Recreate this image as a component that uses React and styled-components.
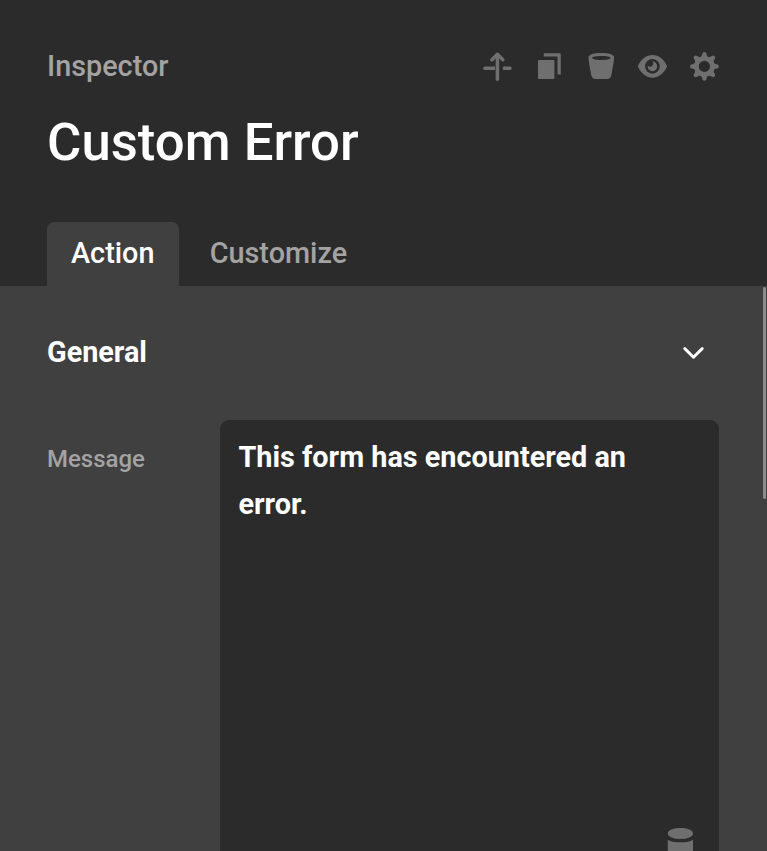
import { useState } from "react";
import styled, { createGlobalStyle } from "styled-components";

const COLORS = {
  header: "#2b2b2b",
  panel: "#404040",
  icon: "#6f6f6f",
  muted: "#a3a3a3",
  scroll: "#8c8c8c",
};

const DEFAULT_MESSAGE = "This form has encountered an error.";

const MoveIcon = () => (
  <Icon viewBox="0 0 30 30">
    <g fill="none" stroke={COLORS.icon} strokeWidth="3.5" strokeLinecap="round">
      <path d="M15.4 2.5V27.2" />
      <path d="M10 7.7L15.4 2.3L20.8 7.7" strokeLinejoin="round" />
      <path d="M2.9 16.3H11.5M22.4 16.3H28" />
      <path d="M11 16.3H13M21.4 16.3H23" strokeLinecap="butt" />
    </g>
  </Icon>
);

const DuplicateIcon = () => (
  <Icon viewBox="0 0 30 30">
    <rect x="4" y="8" width="16.4" height="19" rx="1" />
    <path d="M9.8 1.3H25.7Q26.8 1.3 26.8 2.4V22.5H23.5V4.5H9.8Z" />
  </Icon>
);

const TrashIcon = () => (
  <Icon viewBox="0 0 30 30">
    <path
      fillRule="evenodd"
      d="M15.3 1C22.5 1 28.1 2.4 28.1 5.3C28 9 26.5 17 25.4 23Q24.7 27 20.8 27H9.8Q5.9 27 5.2 23C4.1 17 2.6 9 2.5 5.3C2.5 2.4 8.1 1 15.3 1ZM15.3 4.1C10.4 4.1 6.2 4.8 6.2 5.9C6.2 7 10.4 7.9 15.3 7.9C20.2 7.9 24.4 7 24.4 5.9C24.4 4.8 20.2 4.1 15.3 4.1Z"
    />
  </Icon>
);

const EyeIcon = () => (
  <Icon viewBox="0 0 30 30">
    <path d="M0.2 15.1C-0.2 14.6 -0.2 14 0.2 13.4C3.4 7 8.4 3 14.5 3C20.6 3 25.6 7 28.8 13.4C29.2 14 29.2 14.6 28.8 15.1C25.6 21.8 20.6 25.8 14.5 25.8C8.4 25.8 3.4 21.8 0.2 15.1Z" />
    <circle cx="14.4" cy="14.4" r="7.3" fill={COLORS.header} />
    <path d="M14.3 9.6A4.8 4.8 0 1 1 9.7 13.6A2.9 2.9 0 0 0 14.3 9.6Z" />
  </Icon>
);

const GearIcon = () => (
  <Icon viewBox="0 0 30 30">
    {[0, 45, 90, 135, 180, 225, 270, 315].map((angle) => (
      <path
        key={angle}
        d="M10.4 5.2C11.6 4.5 12.1 3.2 12.3 1.8Q12.6 0 14.4 0Q16.2 0 16.5 1.8C16.7 3.2 17.2 4.5 18.4 5.2L18 10H10.8Z"
        transform={`rotate(${angle} 14.4 14.4)`}
      />
    ))}
    <circle cx="14.4" cy="14.4" r="10.1" />
    <circle cx="14.4" cy="14.4" r="5.6" fill={COLORS.header} />
  </Icon>
);

const App = () => {
  const [tab, setTab] = useState("Action");
  const [message, setMessage] = useState(DEFAULT_MESSAGE);

  return (
    <Inspector>
      <GlobalStyle />
      <Header>
        <TopRow>
          <PanelName>Inspector</PanelName>
          <Toolbar>
            <IconButton aria-label="Move">
              <MoveIcon />
            </IconButton>
            <IconButton aria-label="Duplicate">
              <DuplicateIcon />
            </IconButton>
            <IconButton aria-label="Delete">
              <TrashIcon />
            </IconButton>
            <IconButton aria-label="Preview">
              <EyeIcon />
            </IconButton>
            <IconButton aria-label="Settings">
              <GearIcon />
            </IconButton>
          </Toolbar>
        </TopRow>
        <Title>Custom Error</Title>
        <Tabs>
          {["Action", "Customize"].map((name) => (
            <Tab key={name} $active={tab === name} onClick={() => setTab(name)}>
              {name}
            </Tab>
          ))}
        </Tabs>
      </Header>

      <Body>
        <Content>
          <SectionHeader>
            <SectionTitle>General</SectionTitle>
            <Chevron viewBox="0 0 24 16">
              <path d="M3.8 4.6L12.5 13.2L21.2 4.6" />
            </Chevron>
          </SectionHeader>
          <Field>
            <Label htmlFor="message">Message</Label>
            <InputBox>
              <MessageInput
                id="message"
                value={message}
                spellCheck={false}
                onChange={(e) => setMessage(e.target.value)}
              />
              <DataIcon viewBox="0 0 26 32">
                <ellipse cx="13.4" cy="5.5" rx="12.6" ry="5.6" />
                <path d="M0.8 11.8C4.4 15.2 22.4 15.2 26 11.8V32H0.8Z" />
              </DataIcon>
            </InputBox>
          </Field>
        </Content>
        <ScrollTrack>
          <ScrollThumb />
        </ScrollTrack>
      </Body>
    </Inspector>
  );
};

const GlobalStyle = createGlobalStyle`
  * {
    box-sizing: border-box;
  }

  body {
    margin: 0;
    overflow: hidden;
    font-family: Roboto, sans-serif;
    background-color: ${COLORS.panel};
  }
`;

const Inspector = styled.div`
  display: flex;
  flex-direction: column;
  height: 100vh;
  overflow: hidden;
`;

const Header = styled.header`
  flex: none;
  display: flex;
  flex-direction: column;
  height: 286px;
  padding: 46px 47px 0;
  background-color: ${COLORS.header};
`;

const TopRow = styled.div`
  display: flex;
  justify-content: space-between;
  height: 40px;
`;

const PanelName = styled.div`
  font-size: 28.8px;
  font-weight: 500;
  line-height: 40px;
  color: ${COLORS.muted};
`;

const Toolbar = styled.div`
  display: flex;
  gap: 22px;
  padding-top: 6px;
`;

const IconButton = styled.button`
  width: 30px;
  height: 30px;
  padding: 0;
  border: none;
  background: none;
  cursor: pointer;
`;

const Icon = styled.svg`
  display: block;
  width: 30px;
  height: 30px;
  fill: ${COLORS.icon};
`;

const Title = styled.h1`
  margin: 24px 0 0;
  font-size: 52.7px;
  font-weight: 500;
  line-height: 64px;
  color: white;
`;

const Tabs = styled.div`
  display: flex;
  gap: 7px;
  margin-top: auto;
`;

const Tab = styled.button`
  height: 64px;
  padding: 0 24.3px 2px 24px;
  border: none;
  border-radius: 7px 7px 0 0;
  background-color: ${({ $active }) => ($active ? COLORS.panel : "transparent")};
  color: ${({ $active }) => ($active ? "white" : COLORS.muted)};
  font-family: inherit;
  font-size: 28.8px;
  font-weight: 500;
  cursor: pointer;
`;

const Body = styled.div`
  flex: 1;
  display: flex;
  min-height: 0;
  background-color: ${COLORS.panel};
`;

const Content = styled.div`
  flex: 1;
  padding: 46px 44px 0 47px;
`;

const SectionHeader = styled.div`
  display: flex;
  align-items: center;
  justify-content: space-between;
  height: 40px;
  padding-right: 14px;
`;

const SectionTitle = styled.h2`
  margin: 0;
  font-size: 28.8px;
  font-weight: 700;
  color: white;
`;

const Chevron = styled.svg`
  width: 24px;
  height: 16px;
  fill: none;
  stroke: white;
  stroke-width: 2.9;
  stroke-linecap: round;
  stroke-linejoin: round;
`;

const Field = styled.div`
  display: grid;
  grid-template-columns: 173px 1fr;
  margin-top: 48px;
`;

const Label = styled.label`
  padding-top: 23px;
  font-size: 24px;
  font-weight: 500;
  line-height: 32px;
  color: ${COLORS.muted};
`;

const InputBox = styled.div`
  position: relative;
  height: 460px;
  border-radius: 9px;
  background-color: ${COLORS.header};
`;

const MessageInput = styled.textarea`
  display: block;
  width: 100%;
  height: 100%;
  padding: 14px 18.5px;
  border: none;
  outline: none;
  resize: none;
  background: transparent;
  color: white;
  font-family: inherit;
  font-size: 28.8px;
  font-weight: 700;
  line-height: 47px;
`;

const DataIcon = styled.svg`
  position: absolute;
  right: 26px;
  bottom: 20px;
  width: 26px;
  height: 32px;
  fill: ${COLORS.icon};
`;

const ScrollTrack = styled.div`
  flex: none;
  width: 4px;
  padding-top: 1px;
`;

const ScrollThumb = styled.div`
  width: 3px;
  height: 212px;
  border-radius: 2px;
  background-color: ${COLORS.scroll};
`;

export default App;
